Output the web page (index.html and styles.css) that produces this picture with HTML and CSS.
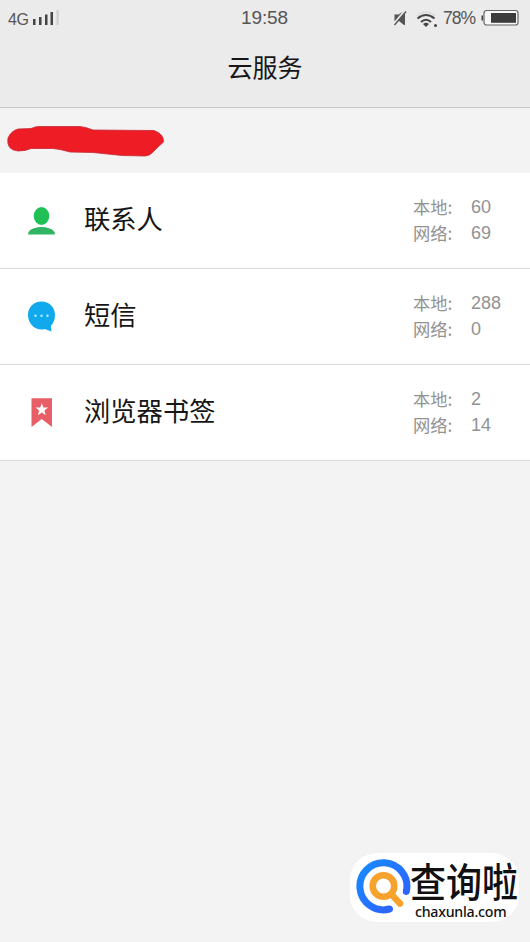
FILE: index.html
```
<!DOCTYPE html>
<html lang="zh-CN">
<head>
<meta charset="utf-8">
<title>云服务</title>
<link rel="stylesheet" href="styles.css">
</head>
<body>
<div class="screen">
  <header class="header">
    <div class="status">
      <div class="status-left">
        <span class="net">4G</span>
        <svg class="signal" width="28" height="16" viewBox="0 0 28 16"><g fill="#444"><rect x="1" y="9" width="2.5" height="6"/><rect x="7" y="7" width="2.5" height="8"/><rect x="13" y="4.500" width="2.5" height="10.500"/><rect x="18.500" y="2" width="2.500" height="13"/></g><rect x="24.500" y="0" width="2.200" height="15" fill="#d0d0d0"/></svg>
      </div>
      <time class="clock">19:58</time>
      <div class="status-right">
        <svg class="mute" width="15" height="16" viewBox="0 0 15 16"><path d="M1.500 4.500h4l5.500-3.500h1v14h-1l-5-4H1.500z" fill="#555"/><path d="M1 14 12.500 0" stroke="#ebebeb" stroke-width="2.400"/><path d="M1.500 15 13 1.500" stroke="#555" stroke-width="1.400"/></svg>
        <svg class="wifi" width="22" height="17" viewBox="0 0 22 17"><g fill="none"><path d="M1 5Q10 -3 19 5" stroke="#dadada" stroke-width="1.600"/><path d="M1.500 7.500Q10 .5 18.500 7.500M5 11Q10 6.500 15 11" stroke="#444" stroke-width="2"/></g><path d="M7 13Q10 10.700 13 13L10 16z" fill="#444"/><circle cx="19.500" cy="14.500" r="1.500" fill="#444"/></svg>
        <span class="percent">78%</span>
        <svg class="battery" width="39" height="18" viewBox="0 0 39 18"><path d="M3 6.500H1.500v5H3" fill="#444"/><rect x="4" y="1.500" width="34" height="14.500" rx="2.500" fill="#f7f7f7" stroke="#666" stroke-width="1.200"/><rect x="11" y="4" width="25" height="9.800" fill="#3c3c3c"/></svg>
      </div>
    </div>
    <h1 class="title">云服务</h1>
  </header>

  <div class="account">
    <svg width="160" height="34" viewBox="7 124 160 34"><path d="M8 138Q11 131 18 129L31 128.500Q36 126 41 126.500H80Q86 127 93 130L154 130.500Q164 134 163.500 142Q160 145 154 151Q150 156 145 156L122 155.500L93 152.500L70 152Q60 149 53 148.500H31Q26 151 18 151Q6 150 8 138Z" fill="#ee1c25" stroke="#c52a37" stroke-width=".8"/></svg>
  </div>

  <main class="list">
    <section class="row">
      <svg class="icon" width="30" height="32" viewBox="0 0 30 32"><ellipse cx="15.500" cy="11" rx="7.800" ry="9" fill="#20c057"/><path d="M2 29.500Q2 25 8 23.300Q11.500 22.100 15.500 22.100T23 23.300Q29 25 29 29.500z" fill="#31b562"/></svg>
      <h2 class="name">联系人</h2>
      <dl class="counts"><dt>本地:</dt><dd>60</dd><dt>网络:</dt><dd>69</dd></dl>
    </section>
    <section class="row">
      <svg class="icon" width="30" height="32" viewBox="0 0 30 32"><path d="M15.500 .5C7.500 .5 2 6.500 2 14S7.500 28.500 15.500 28.500L19.500 28.300 25.500 30.500 24.800 25C27.500 22 29 18.500 29 14C29 6.500 23.500 .5 15.500 .5z" fill="#10a9ee"/><g fill="#b9ecff"><circle cx="9.500" cy="14.800" r="1.200"/><circle cx="15.500" cy="14.800" r="1.200"/><circle cx="21.500" cy="14.800" r="1.200"/></g></svg>
      <h2 class="name">短信</h2>
      <dl class="counts"><dt>本地:</dt><dd>288</dd><dt>网络:</dt><dd>0</dd></dl>
    </section>
    <section class="row">
      <svg class="icon" width="30" height="32" viewBox="0 0 30 32"><path d="M5.500 1.200h20.500v28.800L15.700 22 5.500 30z" fill="#e85e66"/><path d="M15.800 6l1.600 4.500 4.800.1-3.800 3 1.300 4.600-3.900-2.700-3.900 2.700 1.300-4.600-3.800-3 4.800-.1z" fill="#fff"/></svg>
      <h2 class="name">浏览器书签</h2>
      <dl class="counts"><dt>本地:</dt><dd>2</dd><dt>网络:</dt><dd>14</dd></dl>
    </section>
  </main>

  <aside class="brand">
    <svg class="brand-mark" width="58" height="58" viewBox="0 0 58 58"><defs><linearGradient id="ring" x1="0" y1="0" x2="1" y2="1"><stop offset="0" stop-color="#168cff"/><stop offset="1" stop-color="#315cff"/></linearGradient></defs><path d="M51.300 34.500A23.500 23.500 0 1 0 34.500 52" fill="none" stroke="url(#ring)" stroke-width="7" stroke-linecap="round"/><circle cx="28.500" cy="29" r="10.800" fill="none" stroke="#f6a22d" stroke-width="6.600"/><path d="M37 38 45 46.500" stroke="#f6a22d" stroke-width="6.600" stroke-linecap="round"/></svg>
    <div class="brand-text">
      <span class="brand-name">查询啦</span>
      <span class="brand-url">chaxunla.com</span>
    </div>
  </aside>
</div>
</body>
</html>
```
FILE: styles.css
```
* { box-sizing: border-box; }
body {
  margin: 0;
  background: #f3f3f3;
  font-family: "Liberation Sans", "Noto Sans CJK SC", sans-serif;
}
h1, h2, dl, dd { margin: 0; font-weight: 400; }
svg { display: block; flex: none; }
.screen {
  position: relative;
  width: 530px;
  height: 942px;
  overflow: hidden;
}
.header {
  height: 108px;
  background: #ebebeb;
  border-bottom: 1px solid #c8c8c8;
}
.status {
  display: grid;
  grid-template-columns: 1fr auto 1fr;
  align-items: center;
  height: 36px;
  padding: 0 11px 0 8px;
  color: #555;
}
.status-left { display: flex; align-items: center; gap: 4px; }
.net { font-size: 16px; letter-spacing: -0.5px; padding-top: 4px; }
.clock { margin-left: 2px; font-size: 19px; letter-spacing: -0.1px; }
.status-right { display: flex; align-items: center; justify-content: flex-end; }
.wifi { margin: 2px 5px 0 8px; }
.percent { font-size: 17.500px; letter-spacing: -1px; }
.battery { margin-left: 5px; }
.title {
  font-family: "Noto Sans CJK SC", sans-serif;
  font-size: 25px;
  line-height: 36px;
  padding-top: 12px;
  text-align: center;
  color: #161616;
}
.account { height: 65px; padding: 16px 7px; }
.list { background: #fff; }
.row {
  display: flex;
  align-items: center;
  height: 96px;
  padding: 0 20px 0 26px;
  border-bottom: 1px solid #dadada;
}
.name {
  flex: 1;
  margin: -5px 0 0 28px;
  font-family: "Noto Sans CJK SC", sans-serif;
  font-size: 26.300px;
  line-height: 36px;
  color: #161616;
}
.counts {
  display: grid;
  grid-template-columns: 58px 39px;
  width: 97px;
  margin-top: -2px;
  font-size: 18px;
  line-height: 26px;
  color: #929292;
}
.counts dt { font-family: "Noto Sans CJK SC", sans-serif; font-size: 17.300px; }
.brand {
  position: absolute;
  left: 350px;
  top: 853px;
  display: flex;
  width: 169px;
  height: 69px;
  padding: 4px 0 0 5px;
  border-radius: 28px / 26px;
  background: #fff;
  color: #111;
}
.brand-text { display: flex; flex-direction: column; margin-left: -3px; }
.brand-name {
  font-family: "Noto Sans CJK SC", sans-serif;
  font-size: 36px;
  line-height: 45px;
  font-weight: 500;
  white-space: nowrap;
  transform: scaleY(1.1);
}
.brand-url {
  margin: 1px 0 0 5px;
  font-family: "Noto Sans", sans-serif;
  font-size: 14.200px;
  font-weight: 500;
  letter-spacing: -0.25px;
  line-height: 17px;
}
```
